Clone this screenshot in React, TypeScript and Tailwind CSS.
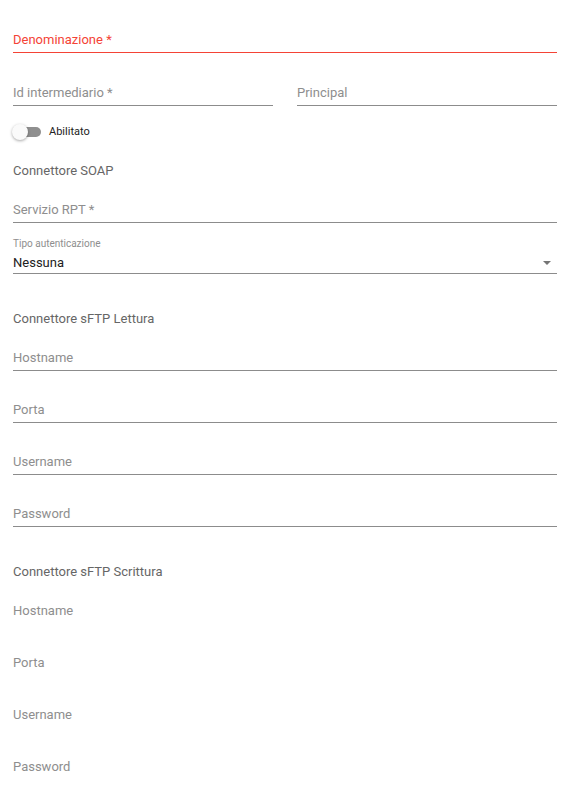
import React from "react";

const Field: React.FC<{ label: string; noLine?: boolean; className?: string }> = ({
  label,
  noLine,
  className = "",
}) => (
  <div
    className={`border-b pb-[4px] pt-[1px] text-[13px] leading-[16px] text-[#8e8e8e] ${
      noLine ? "border-transparent" : "border-[#8c8c8c]"
    } ${className}`}
  >
    {label}
  </div>
);

const Section: React.FC<{ title: string; className?: string }> = ({ title, className = "" }) => (
  <div className={`text-[13px] leading-[16px] text-[#666666] ${className}`}>{title}</div>
);

const App: React.FC = () => {
  return (
    <div
      className="min-h-[809px] bg-white pl-[13px] pr-[20px] pt-[31px]"
      style={{ fontFamily: "Roboto, 'Liberation Sans', sans-serif" }}
    >
      {/* Denominazione */}
      <div className="border-b border-[#f44336] pb-[4px] pt-[1px] text-[13px] leading-[16px] text-[#f44336]">
        Denominazione *
      </div>

      <div className="mt-[31px] grid grid-cols-2 gap-x-6">
        <Field label="Id intermediario *" />
        <Field label="Principal" />
      </div>

      {/* switch */}
      <div className="mt-[16px] flex h-5 items-center gap-2">
        <div className="relative h-[10px] w-[28px] rounded-full bg-[#8f8f8f]">
          <div className="absolute -left-[1px] -top-[3px] h-4 w-4 rounded-full bg-[#fafafa] shadow-[0_1px_3px_rgba(0,0,0,0.35)]" />
        </div>
        <span className="text-[11px] text-[#222222]">Abilitato</span>
      </div>

      <Section title="Connettore SOAP" className="mt-[21px]" />
      <Field label="Servizio RPT *" className="mt-[22px]" />

      {/* select */}
      <div className="mt-[14px] border-b border-[#8c8c8c] pb-[2px] pt-[1px]">
        <div className="text-[10px] leading-[12px] text-[#8e8e8e]">Tipo autenticazione</div>
        <div className="mt-[5px] flex items-center justify-between">
          <span className="text-[13px] leading-[16px] text-[#212121]">Nessuna</span>
          <svg width="8" height="4" viewBox="0 0 8 4" className="mr-[6px]">
            <path d="M0 0h8L4 4z" fill="#757575" />
          </svg>
        </div>
      </div>

      <Section title="Connettore sFTP Lettura" className="mt-[37px]" />
      <Field label="Hostname" className="mt-[22px]" />
      <Field label="Porta" className="mt-[30px]" />
      <Field label="Username" className="mt-[30px]" />
      <Field label="Password" className="mt-[30px]" />

      <Section title="Connettore sFTP Scrittura" className="mt-[37px]" />
      <Field label="Hostname" noLine className="mt-[22px]" />
      <Field label="Porta" noLine className="mt-[30px]" />
      <Field label="Username" noLine className="mt-[30px]" />
      <Field label="Password" noLine className="mt-[30px]" />
    </div>
  );
};

export default App;
